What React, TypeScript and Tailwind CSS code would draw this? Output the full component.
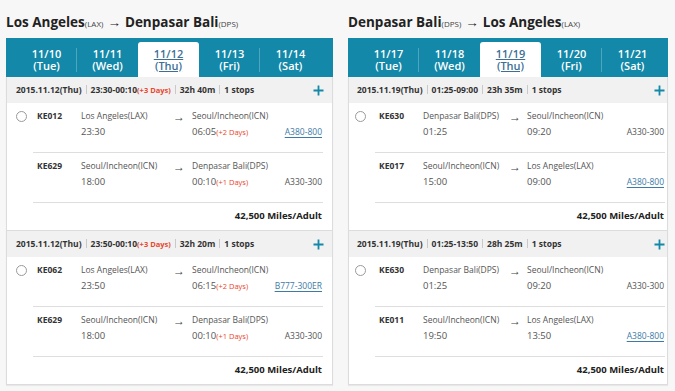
type Leg = {
  code: string;
  from: string;
  dep: string;
  to: string;
  arr: string;
  arrNote?: string;
  aircraft: string;
  link?: boolean;
};

type Group = {
  date: string;
  time: string;
  note?: string;
  dur: string;
  legs: Leg[];
};

type Panel = {
  from: string;
  fromCode: string;
  to: string;
  toCode: string;
  dates: [string, string][];
  right?: boolean;
  groups: Group[];
};

const panels: Panel[] = [
  {
    from: 'Los Angeles',
    fromCode: '(LAX)',
    to: 'Denpasar Bali',
    toCode: '(DPS)',
    dates: [
      ['11/10', '(Tue)'],
      ['11/11', '(Wed)'],
      ['11/12', '(Thu)'],
      ['11/13', '(Fri)'],
      ['11/14', '(Sat)'],
    ],
    groups: [
      {
        date: '2015.11.12(Thu)',
        time: '23:30-00:10',
        note: '(+3 Days)',
        dur: '32h 40m',
        legs: [
          { code: 'KE012', from: 'Los Angeles(LAX)', dep: '23:30', to: 'Seoul/Incheon(ICN)', arr: '06:05', arrNote: '(+2 Days)', aircraft: 'A380-800', link: true },
          { code: 'KE629', from: 'Seoul/Incheon(ICN)', dep: '18:00', to: 'Denpasar Bali(DPS)', arr: '00:10', arrNote: '(+1 Days)', aircraft: 'A330-300' },
        ],
      },
      {
        date: '2015.11.12(Thu)',
        time: '23:50-00:10',
        note: '(+3 Days)',
        dur: '32h 20m',
        legs: [
          { code: 'KE062', from: 'Los Angeles(LAX)', dep: '23:50', to: 'Seoul/Incheon(ICN)', arr: '06:15', arrNote: '(+2 Days)', aircraft: 'B777-300ER', link: true },
          { code: 'KE629', from: 'Seoul/Incheon(ICN)', dep: '18:00', to: 'Denpasar Bali(DPS)', arr: '00:10', arrNote: '(+1 Days)', aircraft: 'A330-300' },
        ],
      },
    ],
  },
  {
    from: 'Denpasar Bali',
    fromCode: '(DPS)',
    to: 'Los Angeles',
    toCode: '(LAX)',
    right: true,
    dates: [
      ['11/17', '(Tue)'],
      ['11/18', '(Wed)'],
      ['11/19', '(Thu)'],
      ['11/20', '(Fri)'],
      ['11/21', '(Sat)'],
    ],
    groups: [
      {
        date: '2015.11.19(Thu)',
        time: '01:25-09:00',
        dur: '23h 35m',
        legs: [
          { code: 'KE630', from: 'Denpasar Bali(DPS)', dep: '01:25', to: 'Seoul/Incheon(ICN)', arr: '09:20', aircraft: 'A330-300' },
          { code: 'KE017', from: 'Seoul/Incheon(ICN)', dep: '15:00', to: 'Los Angeles(LAX)', arr: '09:00', aircraft: 'A380-800', link: true },
        ],
      },
      {
        date: '2015.11.19(Thu)',
        time: '01:25-13:50',
        dur: '28h 25m',
        legs: [
          { code: 'KE630', from: 'Denpasar Bali(DPS)', dep: '01:25', to: 'Seoul/Incheon(ICN)', arr: '09:20', aircraft: 'A330-300' },
          { code: 'KE011', from: 'Seoul/Incheon(ICN)', dep: '19:50', to: 'Los Angeles(LAX)', arr: '13:50', aircraft: 'A380-800', link: true },
        ],
      },
    ],
  },
];

function Plus() {
  return (
    <svg width="11" height="11" viewBox="0 0 11 11" className="text-[#1388a8]">
      <path d="M5.5 0.5v10M0.5 5.5h10" stroke="currentColor" strokeWidth="1.8" />
    </svg>
  );
}

function Sep() {
  return <span className="mx-[4px] inline-block h-[9px] w-px bg-[#c9c9c9] align-[-1px]" />;
}

function LegRow({ leg, first, right }: { leg: Leg; first: boolean; right?: boolean }) {
  const codeW = 'w-[44px] shrink-0';
  const fromW = right ? 'w-[86px] shrink-0' : 'w-[92px] shrink-0';
  const arrowW = right ? 'w-[18px] shrink-0' : 'w-[19px] shrink-0';
  return (
    <div className="flex">
      <div className={`w-[26px] shrink-0 pt-[8px] ${right ? 'pl-[6px]' : 'pl-[9px]'}`}>
        {first && <div className="h-[11px] w-[11px] rounded-full border border-[#9a9a9a] bg-white" />}
      </div>
      <div className={`flex-1 border-b border-[#dedede] pl-[4px] pt-[6px] pb-[12px] ${right ? 'mr-[2px]' : 'mr-[9px]'}`}>
        <div className="flex h-[15px] items-center text-[8.5px]">
          <span className={`${codeW} font-bold text-[#333]`}>{leg.code}</span>
          <span className={`${fromW} whitespace-nowrap text-[#555]`}>{leg.from}</span>
          <span className={`${arrowW} text-[12px] leading-none text-[#444]`}>→</span>
          <span className="flex-1 whitespace-nowrap text-[#555]">{leg.to}</span>
        </div>
        <div className="flex h-[16px] items-center">
          <span className={codeW} />
          <span className={`${fromW} text-[9.5px] text-[#555]`}>{leg.dep}</span>
          <span className={arrowW} />
          <span className="flex-1 text-[9.5px] text-[#555]">
            {leg.arr}
            {leg.arrNote && <span className="text-[7.5px] text-[#e8472e]">{leg.arrNote}</span>}
          </span>
          <span
            className={`pr-[1px] text-[8.5px] ${leg.link ? 'text-[#3d7aa6] underline underline-offset-2' : 'text-[#555]'}`}
          >
            {leg.aircraft}
          </span>
        </div>
      </div>
    </div>
  );
}

function FlightGroup({ group, right }: { group: Group; right?: boolean }) {
  return (
    <div className="border-b border-[#dcdcdc]">
      <div
        className={`flex h-[26px] items-center justify-between bg-[#f1f1f1] text-[8.5px] font-bold text-[#333] ${
          right ? 'pl-[8px] pr-[2px]' : 'pl-[9px] pr-[8px]'
        }`}
      >
        <div>
          {group.date}
          <Sep />
          {group.time}
          {group.note && <span className="text-[7.5px] text-[#e8472e]">{group.note}</span>}
          <Sep />
          {group.dur}
          <Sep />1 stops
        </div>
        <Plus />
      </div>
      {group.legs.map((leg, i) => (
        <LegRow key={i} leg={leg} first={i === 0} right={right} />
      ))}
      <div
        className={`flex h-[27px] items-center justify-end text-[9.5px] font-bold text-[#222] ${
          right ? 'pr-[3px]' : 'pr-[10px]'
        }`}
      >
        42,500 Miles/Adult
      </div>
    </div>
  );
}

function RoutePanel({ panel }: { panel: Panel }) {
  return (
    <div className={panel.right ? 'w-[320px]' : 'w-[327px]'}>
      <h2 className="mb-[7px] h-[18px] text-[13.5px] leading-[18px] font-bold text-[#222]">
        {panel.from}
        <span className="text-[8px] font-normal text-[#444]">{panel.fromCode}</span>
        <span className="mx-[4px] font-normal">→</span>
        {panel.to}
        <span className="text-[8px] font-normal text-[#444]">{panel.toCode}</span>
      </h2>
      <div className="flex h-[39px] items-end bg-[#1388a8] pl-[10px]">
        {panel.dates.map(([d, w], i) => {
          const active = i === 2;
          const sep = i === 0 || i === 3;
          return (
            <div
              key={d}
              className={`relative flex h-[35px] w-[61px] flex-col items-center justify-center text-[11px] font-semibold ${
                active ? 'rounded-t-[3px] bg-white text-[#3d6f96] underline' : 'text-white'
              }`}
            >
              <span className="block h-[12px] leading-[12px]">{d}</span>
              <span className="block h-[12px] leading-[12px]">{w}</span>
              {sep && <span className="absolute right-0 top-[6px] h-[24px] w-px bg-white/25" />}
            </div>
          );
        })}
      </div>
      <div className="border-x border-[#dcdcdc] bg-white shadow-[0_1px_1px_rgba(0,0,0,0.06)]">
        {panel.groups.map((g, i) => (
          <FlightGroup key={i} group={g} right={panel.right} />
        ))}
      </div>
    </div>
  );
}

export default function App() {
  return (
    <div className="min-h-[391px] bg-[#f7f7f7] font-['Open_Sans',sans-serif]">
      <div className="flex gap-[15px] pl-[6px] pt-[13px]">
        {panels.map((p, i) => (
          <RoutePanel key={i} panel={p} />
        ))}
      </div>
    </div>
  );
}
